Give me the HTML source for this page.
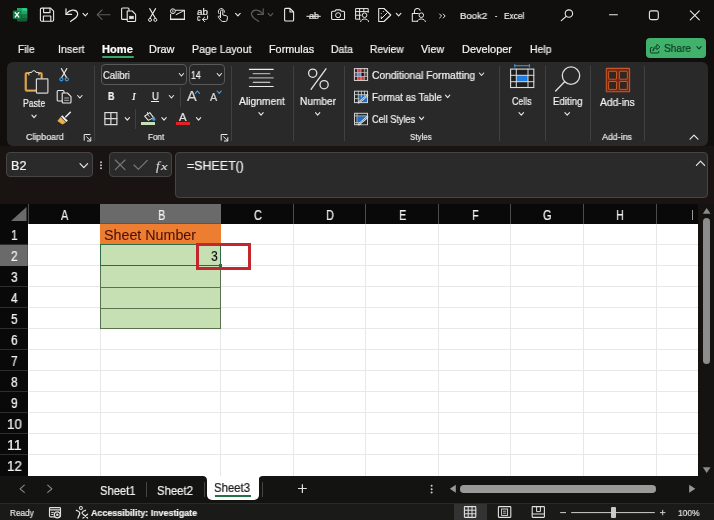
<!DOCTYPE html>
<html><head><meta charset="utf-8"><title>Book2 - Excel</title>
<style>
html,body{margin:0;padding:0;background:#100f0e;}
body{width:714px;height:520px;position:relative;overflow:hidden;font-family:"Liberation Sans",sans-serif;}
#app{position:absolute;left:0;top:0;width:714px;height:520px;overflow:hidden;background:#100f0e;}
#app div{position:absolute;box-sizing:border-box;}
#app span{position:absolute;white-space:pre;line-height:1;transform-origin:0 0;display:block;-webkit-text-stroke:0.22px currentColor;will-change:transform;}
#app svg{position:absolute;left:0;top:0;}
</style></head><body><div id="app">
<div style="left:7px;top:62px;width:701px;height:84px;background:#292929;border-radius:6px;"></div>
<div style="left:94px;top:66px;width:1px;height:75px;background:#404040;"></div>
<div style="left:231px;top:66px;width:1px;height:75px;background:#404040;"></div>
<div style="left:293px;top:66px;width:1px;height:75px;background:#404040;"></div>
<div style="left:344px;top:66px;width:1px;height:75px;background:#404040;"></div>
<div style="left:499px;top:66px;width:1px;height:75px;background:#404040;"></div>
<div style="left:545px;top:66px;width:1px;height:75px;background:#404040;"></div>
<div style="left:590px;top:66px;width:1px;height:75px;background:#404040;"></div>
<div style="left:644px;top:66px;width:1px;height:75px;background:#404040;"></div>
<div style="left:180px;top:87px;width:1px;height:20px;background:#404040;"></div>
<div style="left:135px;top:109px;width:1px;height:20px;background:#404040;"></div>
<div style="left:0px;top:146px;width:714px;height:58px;background:#191412;"></div>
<div style="left:698px;top:204px;width:16px;height:272px;background:#151312;"></div>
<div style="left:6px;top:152px;width:87px;height:25px;background:#2a2a2a;border:1px solid #454545;border-radius:4px;"></div>
<div style="left:109px;top:152px;width:63px;height:25px;background:#2a2a2a;border:1px solid #454545;border-radius:4px;"></div>
<div style="left:175px;top:152px;width:533px;height:46px;background:#2a2a2a;border:1px solid #454545;border-radius:4px;"></div>
<div style="left:0px;top:204px;width:698px;height:20px;background:#090909;"></div>
<div style="left:0px;top:224px;width:28px;height:252px;background:#090909;"></div>
<div style="left:28px;top:224px;width:670px;height:252px;background:#ffffff;"></div>
<div style="left:100px;top:224px;width:1px;height:252px;background:#e8e8e8;"></div>
<div style="left:220px;top:224px;width:1px;height:252px;background:#e8e8e8;"></div>
<div style="left:293px;top:224px;width:1px;height:252px;background:#e8e8e8;"></div>
<div style="left:365px;top:224px;width:1px;height:252px;background:#e8e8e8;"></div>
<div style="left:438px;top:224px;width:1px;height:252px;background:#e8e8e8;"></div>
<div style="left:510px;top:224px;width:1px;height:252px;background:#e8e8e8;"></div>
<div style="left:583px;top:224px;width:1px;height:252px;background:#e8e8e8;"></div>
<div style="left:656px;top:224px;width:1px;height:252px;background:#e8e8e8;"></div>
<div style="left:28px;top:244px;width:670px;height:1px;background:#e8e8e8;"></div>
<div style="left:28px;top:265px;width:670px;height:1px;background:#e8e8e8;"></div>
<div style="left:28px;top:286px;width:670px;height:1px;background:#e8e8e8;"></div>
<div style="left:28px;top:307px;width:670px;height:1px;background:#e8e8e8;"></div>
<div style="left:28px;top:328px;width:670px;height:1px;background:#e8e8e8;"></div>
<div style="left:28px;top:349px;width:670px;height:1px;background:#e8e8e8;"></div>
<div style="left:28px;top:370px;width:670px;height:1px;background:#e8e8e8;"></div>
<div style="left:28px;top:391px;width:670px;height:1px;background:#e8e8e8;"></div>
<div style="left:28px;top:412px;width:670px;height:1px;background:#e8e8e8;"></div>
<div style="left:28px;top:433px;width:670px;height:1px;background:#e8e8e8;"></div>
<div style="left:28px;top:454px;width:670px;height:1px;background:#e8e8e8;"></div>
<div style="left:28px;top:204px;width:1px;height:20px;background:#4c4c4c;"></div>
<div style="left:100px;top:204px;width:1px;height:20px;background:#4c4c4c;"></div>
<div style="left:220px;top:204px;width:1px;height:20px;background:#4c4c4c;"></div>
<div style="left:293px;top:204px;width:1px;height:20px;background:#4c4c4c;"></div>
<div style="left:365px;top:204px;width:1px;height:20px;background:#4c4c4c;"></div>
<div style="left:438px;top:204px;width:1px;height:20px;background:#4c4c4c;"></div>
<div style="left:510px;top:204px;width:1px;height:20px;background:#4c4c4c;"></div>
<div style="left:583px;top:204px;width:1px;height:20px;background:#4c4c4c;"></div>
<div style="left:656px;top:204px;width:1px;height:20px;background:#4c4c4c;"></div>
<div style="left:0px;top:244px;width:28px;height:1px;background:#2e2e2e;"></div>
<div style="left:0px;top:265px;width:28px;height:1px;background:#2e2e2e;"></div>
<div style="left:0px;top:286px;width:28px;height:1px;background:#2e2e2e;"></div>
<div style="left:0px;top:307px;width:28px;height:1px;background:#2e2e2e;"></div>
<div style="left:0px;top:328px;width:28px;height:1px;background:#2e2e2e;"></div>
<div style="left:0px;top:349px;width:28px;height:1px;background:#2e2e2e;"></div>
<div style="left:0px;top:370px;width:28px;height:1px;background:#2e2e2e;"></div>
<div style="left:0px;top:391px;width:28px;height:1px;background:#2e2e2e;"></div>
<div style="left:0px;top:412px;width:28px;height:1px;background:#2e2e2e;"></div>
<div style="left:0px;top:433px;width:28px;height:1px;background:#2e2e2e;"></div>
<div style="left:0px;top:454px;width:28px;height:1px;background:#2e2e2e;"></div>
<div style="left:100px;top:204px;width:121px;height:20px;background:#6a6a6a;border-bottom:1px solid #2f6f48;"></div>
<div style="left:0px;top:245px;width:28px;height:21px;background:#6a6a6a;border-right:1px solid #2f6f48;"></div>
<span style="left:61.42px;top:209.00px;font-size:13.8px;color:#f2f2f2;transform:scaleX(0.8000);">A</span>
<span style="left:157.72px;top:209.00px;font-size:13.8px;color:#f2f2f2;transform:scaleX(0.8000);">B</span>
<span style="left:253.51px;top:209.00px;font-size:13.8px;color:#f2f2f2;transform:scaleX(0.8000);">C</span>
<span style="left:325.91px;top:209.00px;font-size:13.8px;color:#f2f2f2;transform:scaleX(0.8000);">D</span>
<span style="left:398.82px;top:209.00px;font-size:13.8px;color:#f2f2f2;transform:scaleX(0.8000);">E</span>
<span style="left:471.53px;top:209.00px;font-size:13.8px;color:#f2f2f2;transform:scaleX(0.8000);">F</span>
<span style="left:543.01px;top:209.00px;font-size:13.8px;color:#f2f2f2;transform:scaleX(0.8000);">G</span>
<span style="left:615.71px;top:209.00px;font-size:13.8px;color:#f2f2f2;transform:scaleX(0.8000);">H</span>
<span style="left:691.60px;top:209.00px;font-size:13.8px;color:#f2f2f2;transform:scaleX(0.3917);">I</span>
<span style="left:10.55px;top:229.00px;font-size:13.8px;color:#f2f2f2;transform:scaleX(0.8748);">1</span>
<span style="left:10.55px;top:250.00px;font-size:13.8px;color:#f2f2f2;transform:scaleX(0.8748);">2</span>
<span style="left:10.55px;top:271.00px;font-size:13.8px;color:#f2f2f2;transform:scaleX(0.8748);">3</span>
<span style="left:10.55px;top:292.00px;font-size:13.8px;color:#f2f2f2;transform:scaleX(0.8748);">4</span>
<span style="left:10.55px;top:313.00px;font-size:13.8px;color:#f2f2f2;transform:scaleX(0.8748);">5</span>
<span style="left:10.55px;top:334.00px;font-size:13.8px;color:#f2f2f2;transform:scaleX(0.8748);">6</span>
<span style="left:10.55px;top:355.00px;font-size:13.8px;color:#f2f2f2;transform:scaleX(0.8748);">7</span>
<span style="left:10.55px;top:376.00px;font-size:13.8px;color:#f2f2f2;transform:scaleX(0.8748);">8</span>
<span style="left:10.55px;top:397.00px;font-size:13.8px;color:#f2f2f2;transform:scaleX(0.8748);">9</span>
<span style="left:6.50px;top:418.00px;font-size:13.8px;color:#f2f2f2;transform:scaleX(0.9640);">10</span>
<span style="left:6.50px;top:439.00px;font-size:13.8px;color:#f2f2f2;transform:scaleX(1.0337);">11</span>
<span style="left:6.50px;top:460.00px;font-size:13.8px;color:#f2f2f2;transform:scaleX(0.9640);">12</span>
<div style="left:100px;top:224px;width:121px;height:21px;background:#ed7d31;"></div>
<div style="left:100px;top:245px;width:121px;height:84px;background:#c6e0b4;"></div>
<div style="left:100px;top:245px;width:1px;height:84px;background:#58724e;"></div>
<div style="left:220px;top:245px;width:1px;height:84px;background:#58724e;"></div>
<div style="left:100px;top:287px;width:121px;height:1px;background:#58724e;"></div>
<div style="left:100px;top:308px;width:121px;height:1px;background:#58724e;"></div>
<div style="left:100px;top:328px;width:121px;height:1px;background:#58724e;"></div>
<div style="left:100px;top:244px;width:121px;height:1px;background:#2d6b45;"></div>
<div style="left:100px;top:265px;width:121px;height:1px;background:#2d6b45;"></div>
<div style="left:100px;top:245px;width:1px;height:21px;background:#2d6b45;"></div>
<div style="left:220px;top:245px;width:1px;height:21px;background:#2d6b45;"></div>
<div style="left:218.7px;top:263.7px;width:3px;height:3px;background:#2d6b45;"></div>
<span style="left:103.80px;top:228.00px;font-size:14px;color:#4a1006;transform:scaleX(1.0192);-webkit-text-stroke:0.05px #4a1006;">Sheet Number</span>
<span style="left:211.10px;top:249.00px;font-size:14.3px;color:#101010;transform:scaleX(0.8442);-webkit-text-stroke:0.1px #101010;">3</span>
<div style="left:196px;top:243px;width:55px;height:27px;background:transparent;border:3px solid #c3262c;"></div>
<div style="left:0px;top:476px;width:714px;height:27px;background:#131312;"></div>
<div style="left:0px;top:503px;width:714px;height:17px;background:#1a1a19;border-top:1px solid #2a2a2a;"></div>
<div style="left:207px;top:476px;width:51.5px;height:24px;background:#ffffff;border-radius:0 0 5px 5px;"></div>
<div style="left:214.7px;top:495px;width:36px;height:2px;background:#217346;"></div>
<div style="left:146px;top:482px;width:1px;height:15px;background:#454545;"></div>
<div style="left:204px;top:482px;width:1px;height:15px;background:#454545;"></div>
<div style="left:262px;top:482px;width:1px;height:15px;background:#454545;"></div>
<span style="left:100.30px;top:485.00px;font-size:12.4px;color:#f2f2f2;transform:scaleX(0.9031);">Sheet1</span>
<span style="left:157.00px;top:485.00px;font-size:12.4px;color:#f2f2f2;transform:scaleX(0.9133);">Sheet2</span>
<span style="left:214.40px;top:482.00px;font-size:12.4px;color:#1c1c1c;transform:scaleX(0.9158);">Sheet3</span>
<div style="left:703px;top:218px;width:7px;height:146px;background:#8c8c8c;border-radius:3.5px;"></div>
<div style="left:460px;top:485px;width:196px;height:7.5px;background:#9a9a9a;border-radius:3.75px;"></div>
<span style="left:9.70px;top:508.00px;font-size:9.6px;color:#e4e4e4;transform:scaleX(0.8578);">Ready</span>
<span style="left:91.20px;top:508.00px;font-size:9.5px;color:#f0f0f0;transform:scaleX(0.9346);font-weight:bold;">Accessibility: Investigate</span>
<div style="left:454px;top:504px;width:33px;height:16px;background:#333333;"></div>
<span style="left:677.80px;top:508.00px;font-size:9.4px;color:#e4e4e4;transform:scaleX(0.8943);">100%</span>
<div style="left:611px;top:507px;width:4.6px;height:10.5px;background:#c8c8c8;border-radius:1px;"></div>
<span style="left:460.00px;top:11.00px;font-size:9.9px;color:#ececec;transform:scaleX(0.9727);">Book2</span>
<span style="left:494.90px;top:11.00px;font-size:9.9px;color:#ececec;transform:scaleX(0.7291);">-</span>
<span style="left:504.10px;top:11.00px;font-size:9.9px;color:#ececec;transform:scaleX(0.8428);">Excel</span>
<span style="left:18.20px;top:44.00px;font-size:10.8px;color:#f2f2f2;transform:scaleX(0.9532);">File</span>
<span style="left:57.80px;top:44.00px;font-size:10.8px;color:#f2f2f2;transform:scaleX(0.9815);">Insert</span>
<span style="left:149.00px;top:44.00px;font-size:10.8px;color:#f2f2f2;transform:scaleX(1.0101);">Draw</span>
<span style="left:191.60px;top:44.00px;font-size:10.8px;color:#f2f2f2;transform:scaleX(0.9795);">Page Layout</span>
<span style="left:269.10px;top:44.00px;font-size:10.8px;color:#f2f2f2;transform:scaleX(1.0042);">Formulas</span>
<span style="left:331.10px;top:44.00px;font-size:10.8px;color:#f2f2f2;transform:scaleX(0.9643);">Data</span>
<span style="left:369.80px;top:44.00px;font-size:10.8px;color:#f2f2f2;transform:scaleX(0.9534);">Review</span>
<span style="left:421.00px;top:44.00px;font-size:10.8px;color:#f2f2f2;transform:scaleX(0.9894);">View</span>
<span style="left:461.50px;top:44.00px;font-size:10.8px;color:#f2f2f2;transform:scaleX(1.0158);">Developer</span>
<span style="left:529.50px;top:44.00px;font-size:10.8px;color:#f2f2f2;transform:scaleX(0.9676);">Help</span>
<span style="left:102.30px;top:44.00px;font-size:10.8px;color:#ffffff;transform:scaleX(1.0268);font-weight:bold;">Home</span>
<div style="left:102px;top:56px;width:31.7px;height:2px;background:#3aa567;border-radius:1px;"></div>
<div style="left:646px;top:38px;width:59.5px;height:20.3px;background:#41b26b;border-radius:4px;"></div>
<span style="left:664.10px;top:43.00px;font-size:10.9px;color:#0c3a20;transform:scaleX(0.9286);">Share</span>
<span style="left:26.10px;top:133.00px;font-size:9.3px;color:#e6e6e6;transform:scaleX(0.9522);">Clipboard</span>
<span style="left:147.80px;top:133.00px;font-size:9.3px;color:#e6e6e6;transform:scaleX(0.8710);">Font</span>
<span style="left:410.30px;top:133.00px;font-size:9.3px;color:#e6e6e6;transform:scaleX(0.8571);">Styles</span>
<span style="left:602.00px;top:133.00px;font-size:9.3px;color:#e6e6e6;transform:scaleX(0.9516);">Add-ins</span>
<span style="left:23.10px;top:99.00px;font-size:10.2px;color:#f2f2f2;transform:scaleX(0.8510);">Paste</span>
<span style="left:238.60px;top:97.00px;font-size:10.4px;color:#f2f2f2;transform:scaleX(0.9923);">Alignment</span>
<span style="left:300.00px;top:97.00px;font-size:10.4px;color:#f2f2f2;transform:scaleX(0.9730);">Number</span>
<span style="left:512.00px;top:97.00px;font-size:10.4px;color:#f2f2f2;transform:scaleX(0.8436);">Cells</span>
<span style="left:552.80px;top:97.00px;font-size:10.4px;color:#f2f2f2;transform:scaleX(0.9277);">Editing</span>
<span style="left:600.00px;top:97.00px;font-size:10.6px;color:#f2f2f2;transform:scaleX(0.9684);">Add-ins</span>
<span style="left:371.60px;top:71.00px;font-size:10.4px;color:#f2f2f2;transform:scaleX(0.9864);">Conditional Formatting</span>
<span style="left:371.60px;top:93.00px;font-size:10.4px;color:#f2f2f2;transform:scaleX(0.9397);">Format as Table</span>
<span style="left:371.60px;top:115.00px;font-size:10.4px;color:#f2f2f2;transform:scaleX(0.8791);">Cell Styles</span>
<div style="left:101px;top:64px;width:86px;height:21px;background:#272727;border:1px solid #595959;border-radius:4px;"></div>
<div style="left:188.5px;top:64px;width:36.5px;height:21px;background:#272727;border:1px solid #595959;border-radius:4px;"></div>
<span style="left:103.30px;top:71.00px;font-size:10.4px;color:#f2f2f2;transform:scaleX(0.9090);">Calibri</span>
<span style="left:191.20px;top:71.00px;font-size:10.4px;color:#f2f2f2;transform:scaleX(0.8384);">14</span>
<span style="left:108.20px;top:91.00px;font-size:10.8px;color:#f2f2f2;transform:scaleX(0.8202);font-weight:bold;">B</span>
<span style="left:131.56px;top:91.00px;font-size:11px;color:#f2f2f2;transform:scaleX(1.0114);font-style:italic;font-family:'Liberation Serif',serif;">I</span>
<span style="left:151.50px;top:91.00px;font-size:10.6px;color:#f2f2f2;transform:scaleX(0.9140);">U</span>
<div style="left:151.3px;top:101.2px;width:7.4px;height:1px;background:#f2f2f2;"></div>
<span style="left:186.50px;top:89.00px;font-size:14.2px;color:#d8d8d8;transform:scaleX(1.0234);">A</span>
<span style="left:210.20px;top:92.00px;font-size:10.8px;color:#d8d8d8;transform:scaleX(0.9849);">A</span>
<span style="left:178.90px;top:112.00px;font-size:10.8px;color:#e0e0e0;transform:scaleX(1.0542);">A</span>
<div style="left:175.8px;top:122.3px;width:14.2px;height:3px;background:#e32227;"></div>
<div style="left:141.2px;top:122.3px;width:13.8px;height:3px;background:#c5e0b4;"></div>
<span style="left:11.10px;top:160.00px;font-size:12.6px;color:#f2f2f2;transform:scaleX(0.9998);">B2</span>
<span style="left:186.60px;top:160.00px;font-size:12.6px;color:#f2f2f2;transform:scaleX(0.9849);">=SHEET()</span>
<span style="left:155.60px;top:159.00px;font-size:13.5px;color:#d6d6d6;transform:scaleX(0.9376);font-style:italic;font-family:'Liberation Serif',serif;">f</span>
<span style="left:160.78px;top:162.00px;font-size:10.5px;color:#d6d6d6;transform:scaleX(1.3947);font-style:italic;font-family:'Liberation Serif',serif;">x</span>
<span style="left:196.80px;top:8.00px;font-size:8.6px;color:#e9e9e9;transform:scaleX(1.1497);">ab</span>
<span style="left:197.10px;top:14.00px;font-size:8.6px;color:#e9e9e9;transform:scaleX(0.8140);">c</span>
<span style="left:308.60px;top:12.00px;font-size:9.2px;color:#e9e9e9;transform:scaleX(0.9770);">ab</span>
<svg width="714" height="520" viewBox="0 0 714 520">
<path d="M26.5 207 L26.5 221 L11 221 Z" fill="#6a6a6a"/>
<path d="M202.5 476 H207 V480.5 Q207 476 202.5 476 Z M263 476 H258.5 V480.5 Q258.5 476 263 476 Z" fill="#ffffff"/>
<path d="M24.3 485.2 L20.1 488.8 L24.3 492.4" stroke="#8c8c8c" stroke-width="1.1" fill="none" stroke-linecap="round" stroke-linejoin="round"/>
<path d="M47.7 485.2 L51.9 488.8 L47.7 492.4" stroke="#8c8c8c" stroke-width="1.1" fill="none" stroke-linecap="round" stroke-linejoin="round"/>
<path d="M298 488.5 H306.8 M302.4 484.2 V492.9" stroke="#e0e0e0" stroke-width="1.2" fill="none"/>
<path d="M702.8 213.8 L710.6 213.8 L706.7 208 Z" fill="#8a8a8a"/>
<path d="M702.8 467.3 L710.6 467.3 L706.7 473 Z" fill="#8a8a8a"/>
<path d="M455.8 484.8 L455.8 492.8 L449.8 488.8 Z" fill="#9a9a9a"/>
<path d="M689.2 484.8 L689.2 492.8 L695.3 488.8 Z" fill="#9a9a9a"/>
<circle cx="431.6" cy="485.8" r="1" fill="#d0d0d0"/>
<circle cx="431.6" cy="489.2" r="1" fill="#d0d0d0"/>
<circle cx="431.6" cy="492.6" r="1" fill="#d0d0d0"/>
<path d="M560.2 512.6 H566 M571.2 512.6 H654.8 M660 512.6 H665.4 M662.7 509.9 V515.3" stroke="#cfcfcf" stroke-width="1" fill="none"/>
<rect x="17" y="8" width="10.2" height="13.3" rx="1.3" stroke="none" stroke-width="0" fill="#1e9c5b"/>
<path d="M22.1 8 h3.8 a1.3 1.3 0 0 1 1.3 1.3 v2.0 h-5.1z" fill="#35c481"/>
<path d="M17 8 h5.1 v3.3 h-5.1z" fill="#21a366" />
<path d="M22.1 11.3 h5.1 v3.3 h-5.1z" fill="#21a366"/>
<path d="M17 14.6 h10.2 v5.4 a1.3 1.3 0 0 1 -1.3 1.3 h-7.6 a1.3 1.3 0 0 1 -1.3 -1.3z" fill="#165c36"/>
<path d="M22.1 14.6 h5.1 v3.3 h-5.1z" fill="#117c41"/>
<rect x="12.8" y="10.6" width="8.4" height="8.4" rx="1.2" stroke="none" stroke-width="0" fill="#107c41"/>
<path d="M15.2 12.6 L18.8 17 M18.8 12.6 L15.2 17" stroke="#ffffff" stroke-width="1.25" fill="none" stroke-linecap="round" stroke-linejoin="round" />
<path d="M41.6 8.1 H50.6 L53.6 11.1 V20.1 a1.2 1.2 0 0 1 -1.2 1.2 H41.6 a1.2 1.2 0 0 1 -1.2 -1.2 V9.3 a1.2 1.2 0 0 1 1.2 -1.2 Z" stroke="#e9e9e9" stroke-width="1.1" fill="none" stroke-linecap="round" stroke-linejoin="round" />
<path d="M43.6 8.3 V12.6 H50 V8.3" stroke="#e9e9e9" stroke-width="1.1" fill="none" stroke-linecap="round" stroke-linejoin="round" />
<path d="M43.4 21.1 V16 H50.8 V21.1" stroke="#e9e9e9" stroke-width="1.1" fill="none" stroke-linecap="round" stroke-linejoin="round" />
<path d="M66 8.8 V14.4 H71.6" stroke="#e9e9e9" stroke-width="1.2" fill="none" stroke-linecap="round" stroke-linejoin="round" />
<path d="M66.2 14.2 C69.5 9.2 76.2 8.6 77.6 13 C78.6 16.6 74.5 18.6 70.6 21.5" stroke="#e9e9e9" stroke-width="1.2" fill="none" stroke-linecap="round" stroke-linejoin="round" />
<path d="M83 13.3L85.3 15.8L87.6 13.3" stroke="#e9e9e9" stroke-width="1.1" fill="none" stroke-linecap="round" stroke-linejoin="round"/>
<path d="M97.2 14.7 H110 M102 10 L97.2 14.7 L102 19.4" stroke="#5c5c5c" stroke-width="1.1" fill="none" stroke-linecap="round" stroke-linejoin="round" />
<path d="M127 19.4 H122.6 a1 1 0 0 1 -1 -1 V9 a1 1 0 0 1 1 -1 H128 a1 1 0 0 1 1 1 V10.6" stroke="#e9e9e9" stroke-width="1.1" fill="none" stroke-linecap="round" stroke-linejoin="round" />
<path d="M127.2 11 H132.2 L135.6 14.4 V20.5 a1 1 0 0 1 -1 1 H128.2 a1 1 0 0 1 -1 -1 Z" stroke="#e9e9e9" stroke-width="1.1" fill="none" stroke-linecap="round" stroke-linejoin="round" />
<rect x="129.6" y="16.2" width="3.8" height="2.6" rx="0" stroke="#e9e9e9" stroke-width="0.6" fill="#e9e9e9"/>
<path d="M149.7 8.6 L155.4 18.3 M155.6 8.6 L149.9 18.3" stroke="#e9e9e9" stroke-width="1.1" fill="none" stroke-linecap="round" stroke-linejoin="round" />
<circle cx="150" cy="19.9" r="1.5" stroke="#e9e9e9" stroke-width="1.0" fill="none"/>
<circle cx="155.3" cy="19.9" r="1.5" stroke="#e9e9e9" stroke-width="1.0" fill="none"/>
<path d="M175.6 10.2 H184.4 V19.4 H170.6 V14.2" stroke="#e9e9e9" stroke-width="1.1" fill="none" stroke-linecap="round" stroke-linejoin="round" />
<circle cx="172.9" cy="11.2" r="2.4" stroke="#e9e9e9" stroke-width="1.0" fill="none"/>
<path d="M172.9 10.2 V12.2" stroke="#e9e9e9" stroke-width="0.9" fill="none" stroke-linecap="round" stroke-linejoin="round" />
<path d="M176.2 14.6 L184 10.6" stroke="#e9e9e9" stroke-width="1.0" fill="none" stroke-linecap="round" stroke-linejoin="round" />
<path d="M170.6 19.4 H184.4" stroke="#e9e9e9" stroke-width="1.4" fill="none" stroke-linecap="round" stroke-linejoin="round" />
<path d="M207.6 15.8 V18.2 a1.2 1.2 0 0 1 -1.2 1.2 H202.6 M204.6 17.2 L202.4 19.4 L204.6 21.6" stroke="#e9e9e9" stroke-width="1.0" fill="none" stroke-linecap="round" stroke-linejoin="round" />
<path d="M218.9 13.6 A3.1 3.1 0 1 1 224.4 12.2" stroke="#e9e9e9" stroke-width="1.0" fill="none" stroke-linecap="round" stroke-linejoin="round" />
<path d="M220.5 17.6 V11.3 a1.15 1.15 0 0 1 2.3 0 V15 l3.6 0.8 a1.4 1.4 0 0 1 1.1 1.5 l-0.5 2.9 a1.6 1.6 0 0 1 -1.6 1.3 H222.6 a1.6 1.6 0 0 1 -1.3 -0.7 L218.3 17.3 a1 1 0 0 1 1.5 -1.2 Z" stroke="#e9e9e9" stroke-width="1.0" fill="none" stroke-linecap="round" stroke-linejoin="round" />
<path d="M235.6 13.3L237.89999999999998 15.8L240.2 13.3" stroke="#e9e9e9" stroke-width="1.1" fill="none" stroke-linecap="round" stroke-linejoin="round"/>
<path d="M263.2 8.8 V14.4 H257.6" stroke="#5c5c5c" stroke-width="1.2" fill="none" stroke-linecap="round" stroke-linejoin="round" />
<path d="M263 14.2 C259.7 9.2 253 8.6 251.6 13 C250.6 16.6 254.7 18.6 258.6 21.5" stroke="#5c5c5c" stroke-width="1.2" fill="none" stroke-linecap="round" stroke-linejoin="round" />
<path d="M268.2 13.3L270.5 15.8L272.8 13.3" stroke="#5c5c5c" stroke-width="1.1" fill="none" stroke-linecap="round" stroke-linejoin="round"/>
<path d="M285.6 8.4 H290 L293.6 12 V20 a1 1 0 0 1 -1 1 H285.6 a1 1 0 0 1 -1 -1 V9.4 a1 1 0 0 1 1 -1 Z M290 8.6 V12 H293.4" stroke="#e9e9e9" stroke-width="1.1" fill="none" stroke-linecap="round" stroke-linejoin="round" />
<path d="M306.8 16.3 H320.4" stroke="#e9e9e9" stroke-width="1.0" fill="none" stroke-linecap="round" stroke-linejoin="round" />
<path d="M332.7 11.2 H335 L336 9.9 H340.2 L341.2 11.2 H343.4 a1.1 1.1 0 0 1 1.1 1.1 V18.4 a1.1 1.1 0 0 1 -1.1 1.1 H332.7 a1.1 1.1 0 0 1 -1.1 -1.1 V12.3 a1.1 1.1 0 0 1 1.1 -1.1 Z" stroke="#e9e9e9" stroke-width="1.1" fill="none" stroke-linecap="round" stroke-linejoin="round" />
<circle cx="338.1" cy="15.2" r="2.5" stroke="#e9e9e9" stroke-width="1.0" fill="none"/>
<path d="M360 19.2 H355.6 V8.6 H368.2 V12.4 M355.6 11.6 H368.2 M359.6 8.6 V19.2 M355.6 15.2 H361 M363.8 8.6 V11.6" stroke="#e9e9e9" stroke-width="1.0" fill="none" stroke-linecap="round" stroke-linejoin="round" />
<circle cx="364.6" cy="15.2" r="2.3" stroke="#e9e9e9" stroke-width="1.0" fill="none"/>
<path d="M360.6 21.6 C360.8 18 368.4 18 368.6 21.6" stroke="#e9e9e9" stroke-width="1.0" fill="none" stroke-linecap="round" stroke-linejoin="round" />
<path d="M378.7 8.5 H384 L390.8 15 L384 21.5 H378.7 Z" stroke="#e9e9e9" stroke-width="1.05" fill="none" stroke-linecap="round" stroke-linejoin="round" />
<path d="M381.4 18.6 L387.2 12.8 M381.4 18.6 L381.2 16.9 M383.4 11.4 v0.1 M381.3 13.6 v0.1" stroke="#e9e9e9" stroke-width="1.0" fill="none" stroke-linecap="round" stroke-linejoin="round" />
<path d="M396.3 13.3L398.6 15.8L400.9 13.3" stroke="#e9e9e9" stroke-width="1.1" fill="none" stroke-linecap="round" stroke-linejoin="round"/>
<path d="M414.4 13.4 V11.4 a3 3 0 0 1 5.7 -1.2" stroke="#e9e9e9" stroke-width="1.05" fill="none" stroke-linecap="round" stroke-linejoin="round" />
<path d="M417.2 21.3 H412.3 V13.5 H418.4" stroke="#e9e9e9" stroke-width="1.05" fill="none" stroke-linecap="round" stroke-linejoin="round" />
<circle cx="421.3" cy="15.2" r="2.3" stroke="#e9e9e9" stroke-width="1.0" fill="none"/>
<path d="M417.2 21.6 C417.4 18 425.2 18 425.4 21.6" stroke="#e9e9e9" stroke-width="1.0" fill="none" stroke-linecap="round" stroke-linejoin="round" />
<path d="M439.6 14 L441.6 16 L439.6 18 M443.2 14 L445.2 16 L443.2 18" stroke="#e9e9e9" stroke-width="1.0" fill="none" stroke-linecap="round" stroke-linejoin="round" />
<circle cx="568.9" cy="13.6" r="3.7" stroke="#e9e9e9" stroke-width="1.1" fill="none"/>
<path d="M566.2 16.4 L561.3 20.6" stroke="#e9e9e9" stroke-width="1.2" fill="none" stroke-linecap="round" stroke-linejoin="round" />
<path d="M609.5 14.8 H617.4" stroke="#e9e9e9" stroke-width="1.1" fill="none" stroke-linecap="round" stroke-linejoin="round" />
<rect x="649.4" y="10.9" width="8.9" height="8.7" rx="1.9" stroke="#e9e9e9" stroke-width="1.1" fill="none"/>
<path d="M690.3 10.8 L699.3 19.8 M699.3 10.8 L690.3 19.8" stroke="#e9e9e9" stroke-width="1.1" fill="none" stroke-linecap="round" stroke-linejoin="round" />
<path d="M652.2 47.6 H651.2 a0.8 0.8 0 0 0 -0.8 0.8 V52.2 a0.8 0.8 0 0 0 0.8 0.8 H658 a0.8 0.8 0 0 0 0.8 -0.8 V51.4" stroke="#0c3a20" stroke-width="1.0" fill="none" stroke-linecap="round" stroke-linejoin="round" />
<path d="M653 50.6 C653.2 47.6 655.2 46.2 657 46.2 V44.2 L659.8 47 L657 49.8 V47.9 C655.4 47.9 654 48.6 653 50.6 Z" stroke="#0c3a20" stroke-width="0.9" fill="none" stroke-linecap="round" stroke-linejoin="round" />
<path d="M696.9 46.6L699.0 48.8L701.1 46.6" stroke="#0c3a20" stroke-width="1.1" fill="none" stroke-linecap="round" stroke-linejoin="round"/>
<rect x="25.6" y="72.9" width="16.2" height="17.9" rx="1.2" stroke="#d8942f" stroke-width="2.0" fill="none"/>
<rect x="26.2" y="73.5" width="15.0" height="16.7" rx="0.8" stroke="#f3c777" stroke-width="0.7" fill="none"/>
<path d="M28.9 75 V73.3 a0.9 0.9 0 0 1 0.9 -0.9 H31.7 a2.2 2.2 0 0 1 4.3 0 H38 a0.9 0.9 0 0 1 0.9 0.9 V75" stroke="#e9e9e9" stroke-width="1.0" fill="#292929" stroke-linecap="round" stroke-linejoin="round" />
<rect x="36.4" y="78.8" width="11.5" height="14.3" rx="0.8" stroke="#d6d6d6" stroke-width="1.2" fill="#2d2d2d"/>
<path d="M31.9 115.2L34.05 117.6L36.2 115.2" stroke="#e9e9e9" stroke-width="1.1" fill="none" stroke-linecap="round" stroke-linejoin="round"/>
<path d="M61.4 68.6 L66.6 77.6 M66.8 68.6 L61.6 77.6" stroke="#e9e9e9" stroke-width="1.1" fill="none" stroke-linecap="round" stroke-linejoin="round" />
<circle cx="61.4" cy="79.3" r="1.6" stroke="#3f9be3" stroke-width="1.1" fill="none"/>
<circle cx="66.8" cy="79.3" r="1.6" stroke="#3f9be3" stroke-width="1.1" fill="none"/>
<path d="M62 101 H58.2 a1 1 0 0 1 -1 -1 V91.5 a1 1 0 0 1 1 -1 H63 a1 1 0 0 1 1 1 V92.6" stroke="#e9e9e9" stroke-width="1.1" fill="none" stroke-linecap="round" stroke-linejoin="round" />
<path d="M62.2 93 H67.4 L71 96.6 V102 a1 1 0 0 1 -1 1 H63.2 a1 1 0 0 1 -1 -1 Z" stroke="#e9e9e9" stroke-width="1.1" fill="none" stroke-linecap="round" stroke-linejoin="round" />
<path d="M64.6 98 H68.6 M64.6 100.3 H68.6" stroke="#bdbdbd" stroke-width="0.9" fill="none" stroke-linecap="round" stroke-linejoin="round" />
<path d="M77.7 95.5L79.85 98L82 95.5" stroke="#e9e9e9" stroke-width="1.1" fill="none" stroke-linecap="round" stroke-linejoin="round"/>
<path d="M70.3 112.3 L65.8 116.8" stroke="#e9e9e9" stroke-width="1.6" fill="none" stroke-linecap="round" stroke-linejoin="round" />
<path d="M62.3 115.2 L67.9 120.8 L66.2 122 L61 116.6 Z" fill="#f0f0f0"/>
<path d="M60.6 117 L65.9 122.4 L62.4 124.6 L57.4 120.9 Z" fill="#e9b04f"/>
<path d="M84.2 140.2 V134.5 H90.0" stroke="#e9e9e9" stroke-width="1.0" fill="none" stroke-linecap="round" stroke-linejoin="round" />
<path d="M86.60000000000001 136.8 L90.60000000000001 140.8 M90.8 137.6 V141 H87.4" stroke="#e9e9e9" stroke-width="1.0" fill="none" stroke-linecap="round" stroke-linejoin="round" />
<path d="M221.2 140.2 V134.5 H227.0" stroke="#e9e9e9" stroke-width="1.0" fill="none" stroke-linecap="round" stroke-linejoin="round" />
<path d="M223.6 136.8 L227.6 140.8 M227.79999999999998 137.6 V141 H224.39999999999998" stroke="#e9e9e9" stroke-width="1.0" fill="none" stroke-linecap="round" stroke-linejoin="round" />
<path d="M179.3 73.5L181.45 76L183.6 73.5" stroke="#e9e9e9" stroke-width="1.1" fill="none" stroke-linecap="round" stroke-linejoin="round"/>
<path d="M217.2 73.5L219.35 76L221.5 73.5" stroke="#e9e9e9" stroke-width="1.1" fill="none" stroke-linecap="round" stroke-linejoin="round"/>
<path d="M169.3 95.5L171.45 98L173.6 95.5" stroke="#e9e9e9" stroke-width="1.1" fill="none" stroke-linecap="round" stroke-linejoin="round"/>
<path d="M195.3 93.4 L197.4 91 L199.5 93.4" stroke="#4aa3e8" stroke-width="1.1" fill="none" stroke-linecap="round" stroke-linejoin="round" />
<path d="M217.2 91 L219.2 93.3 L221.2 91" stroke="#4aa3e8" stroke-width="1.1" fill="none" stroke-linecap="round" stroke-linejoin="round" />
<rect x="104.9" y="112.6" width="12" height="12" rx="0" stroke="#dadada" stroke-width="1.2" fill="none"/>
<path d="M110.9 112.6 V124.6 M104.9 118.6 H116.9" stroke="#dadada" stroke-width="1.2" fill="none" stroke-linecap="round" stroke-linejoin="round" />
<path d="M125.2 117.7L127.35 120.2L129.5 117.7" stroke="#e9e9e9" stroke-width="1.1" fill="none" stroke-linecap="round" stroke-linejoin="round"/>
<path d="M144.6 116.2 L149.8 112.6 L153.6 117.6 L148.4 120.4 Z" stroke="#e9e9e9" stroke-width="1.05" fill="none" stroke-linecap="round" stroke-linejoin="round" />
<path d="M147.4 112.4 C147.2 114.2 148 115.6 149.2 116.4" stroke="#e9e9e9" stroke-width="0.9" fill="none" stroke-linecap="round" stroke-linejoin="round" />
<path d="M153.9 116.2 c0.9 1.3 1.5 2.2 1.5 3 a1.5 1.5 0 0 1 -3 0 c0 -0.8 0.6 -1.7 1.5 -3z" fill="#4a9be0"/>
<path d="M161.9 117.7L164.05 120.2L166.2 117.7" stroke="#e9e9e9" stroke-width="1.1" fill="none" stroke-linecap="round" stroke-linejoin="round"/>
<path d="M196.4 117.7L198.55 120.2L200.7 117.7" stroke="#e9e9e9" stroke-width="1.1" fill="none" stroke-linecap="round" stroke-linejoin="round"/>
<path d="M249.4 69.4 H273.2 M253.2 82.3 H269.8 M249.4 86.5 H273.2" stroke="#ececec" stroke-width="1.1" fill="none" stroke-linecap="round" stroke-linejoin="round" />
<path d="M253.2 73.7 H269.8 M249.4 77.9 H273.2" stroke="#a8a8a8" stroke-width="1.3" fill="none" stroke-linecap="round" stroke-linejoin="round" />
<path d="M258.9 112.7L261.04999999999995 115.2L263.2 112.7" stroke="#e9e9e9" stroke-width="1.1" fill="none" stroke-linecap="round" stroke-linejoin="round"/>
<circle cx="312.7" cy="73.2" r="4.1" stroke="#e4e4e4" stroke-width="1.3" fill="none"/>
<circle cx="324.1" cy="84.7" r="4.1" stroke="#e4e4e4" stroke-width="1.3" fill="none"/>
<path d="M326 68.8 L311 89.3" stroke="#e4e4e4" stroke-width="1.3" fill="none" stroke-linecap="round" stroke-linejoin="round" />
<path d="M315.5 112.7L317.65 115.2L319.8 112.7" stroke="#e9e9e9" stroke-width="1.1" fill="none" stroke-linecap="round" stroke-linejoin="round"/>
<rect x="354.40" y="68.60" width="3.3" height="3.95" fill="#43201f"/>
<rect x="357.70" y="68.60" width="3.3" height="3.95" fill="#e3343a"/>
<rect x="361.00" y="68.60" width="3.3" height="3.95" fill="#3a2322"/>
<rect x="364.30" y="68.60" width="3.3" height="3.95" fill="#4b4444"/>
<rect x="354.40" y="72.55" width="3.3" height="3.95" fill="#39609f"/>
<rect x="357.70" y="72.55" width="3.3" height="3.95" fill="#5a8bd2"/>
<rect x="361.00" y="72.55" width="3.3" height="3.95" fill="#120c0c"/>
<rect x="364.30" y="72.55" width="3.3" height="3.95" fill="#5a5a5a"/>
<rect x="354.40" y="76.50" width="3.3" height="3.95" fill="#43201f"/>
<rect x="357.70" y="76.50" width="3.3" height="3.95" fill="#e3343a"/>
<rect x="361.00" y="76.50" width="3.3" height="3.95" fill="#d8383d"/>
<rect x="364.30" y="76.50" width="3.3" height="3.95" fill="#3a2a2a"/>
<rect x="354.4" y="68.6" width="13.2" height="11.85" rx="0" stroke="#dcd2d2" stroke-width="1.0" fill="none"/>
<path d="M357.70 68.6 V80.44999999999999 M361.00 68.6 V80.44999999999999 M364.30 68.6 V80.44999999999999 M354.4 72.55 H367.59999999999997 M354.4 76.5 H367.59999999999997" stroke="#d8c8c8" stroke-width="0.7" fill="none" stroke-linecap="round" stroke-linejoin="round" />
<rect x="358.3" y="94.6" width="9.2" height="8" fill="#1f6fc4"/>
<rect x="354.5" y="91.2" width="13" height="11.4" rx="0" stroke="#d0d0d0" stroke-width="1.0" fill="none"/>
<path d="M354.5 94.6 H367.5 M358.3 91.2 V102.6 M361.4 91.2 V97 M364.5 91.2 V95.4 M354.5 98.6 H359" stroke="#d0d0d0" stroke-width="0.8" fill="none" stroke-linecap="round" stroke-linejoin="round" />
<path d="M358.7 102.5 L367.3 95.5" stroke="#f6f6f6" stroke-width="2.0" fill="none" stroke-linecap="round" stroke-linejoin="round" />
<path d="M359 102.2 L367 95.8" stroke="#25303c" stroke-width="0.6" fill="none" stroke-linecap="round" stroke-linejoin="round" />
<rect x="357.4" y="116.2" width="9.6" height="6.2" fill="#1f6fc4"/>
<rect x="354.5" y="113.3" width="13" height="11.4" rx="0" stroke="#d0d0d0" stroke-width="1.0" fill="none"/>
<path d="M357 113.3 V124.7 M354.5 115.9 H367.5 M354.5 122.6 H360" stroke="#d0d0d0" stroke-width="0.8" fill="none" stroke-linecap="round" stroke-linejoin="round" />
<path d="M361.5 124.2 L367 119.2 V124.2 Z" fill="#292929"/>
<path d="M358.8 124.4 L367.3 117" stroke="#f6f6f6" stroke-width="2.0" fill="none" stroke-linecap="round" stroke-linejoin="round" />
<path d="M359.1 124.1 L367 117.3" stroke="#25303c" stroke-width="0.6" fill="none" stroke-linecap="round" stroke-linejoin="round" />
<path d="M479.4 73L481.54999999999995 75.5L483.7 73" stroke="#e9e9e9" stroke-width="1.1" fill="none" stroke-linecap="round" stroke-linejoin="round"/>
<path d="M445.5 95.2L447.65 97.7L449.8 95.2" stroke="#e9e9e9" stroke-width="1.1" fill="none" stroke-linecap="round" stroke-linejoin="round"/>
<path d="M419.4 117.2L421.54999999999995 119.7L423.7 117.2" stroke="#e9e9e9" stroke-width="1.1" fill="none" stroke-linecap="round" stroke-linejoin="round"/>
<rect x="510.6" y="69.1" width="23.2" height="18.4" rx="0" stroke="#dcdcdc" stroke-width="1.1" fill="#1d1d1d"/>
<rect x="516.3" y="75.3" width="11.7" height="6.4" fill="#1f7ce0"/>
<path d="M516.3 69.1 V87.5 M528 69.1 V87.5 M510.6 75.3 H533.8 M510.6 81.7 H533.8" stroke="#dcdcdc" stroke-width="1.0" fill="none" stroke-linecap="round" stroke-linejoin="round" />
<path d="M514.8 65.8 H529.4 M514.8 64.6 V67 M529.4 64.6 V67" stroke="#4a9be0" stroke-width="1.1" fill="none" stroke-linecap="round" stroke-linejoin="round" />
<path d="M519 112.7L521.3 115.2L523.6 112.7" stroke="#e9e9e9" stroke-width="1.1" fill="none" stroke-linecap="round" stroke-linejoin="round"/>
<circle cx="571" cy="75.6" r="8.7" stroke="#dcdcdc" stroke-width="1.3" fill="none"/>
<path d="M564.6 81.8 L555.6 91" stroke="#dcdcdc" stroke-width="1.4" fill="none" stroke-linecap="round" stroke-linejoin="round" />
<path d="M564.9 112.7L567.2 115.2L569.5 112.7" stroke="#e9e9e9" stroke-width="1.1" fill="none" stroke-linecap="round" stroke-linejoin="round"/>
<rect x="606.3" y="68.4" width="23.3" height="23.4" rx="0.5" stroke="#c8582c" stroke-width="1.1" fill="#74280f"/>
<rect x="608.6" y="71.3" width="7.9" height="7.9" rx="0.3" stroke="#c8582c" stroke-width="1.0" fill="#33261f"/>
<rect x="608.6" y="81.5" width="7.9" height="7.9" rx="0.3" stroke="#c8582c" stroke-width="1.0" fill="#33261f"/>
<rect x="619.4" y="71.3" width="7.9" height="7.9" rx="0.3" stroke="#c8582c" stroke-width="1.0" fill="#33261f"/>
<rect x="619.4" y="81.5" width="7.9" height="7.9" rx="0.3" stroke="#c8582c" stroke-width="1.0" fill="#33261f"/>
<path d="M690 139.2 L694 135.2 L698 139.2" stroke="#e9e9e9" stroke-width="1.2" fill="none" stroke-linecap="round" stroke-linejoin="round" />
<path d="M80 163.6 L83.8 167.6 L87.6 163.6" stroke="#e9e9e9" stroke-width="1.2" fill="none" stroke-linecap="round" stroke-linejoin="round" />
<circle cx="101" cy="162.2" r="0.95" fill="#d0d0d0"/>
<circle cx="101" cy="165.2" r="0.95" fill="#d0d0d0"/>
<circle cx="101" cy="168.2" r="0.95" fill="#d0d0d0"/>
<path d="M115.3 160 L125 169.7 M125 160 L115.3 169.7" stroke="#7c7c7c" stroke-width="1.1" fill="none" stroke-linecap="round" stroke-linejoin="round" />
<path d="M134 165 L138.4 169.3 L147.3 160.4" stroke="#7c7c7c" stroke-width="1.1" fill="none" stroke-linecap="round" stroke-linejoin="round" />
<path d="M696.4 165.3 L700.5 161.2 L704.6 165.3" stroke="#e9e9e9" stroke-width="1.2" fill="none" stroke-linecap="round" stroke-linejoin="round" />
<rect x="49.5" y="507.6" width="11" height="9.2" rx="0.9" stroke="#e2e2e2" stroke-width="1.15" fill="none"/>
<path d="M49.5 509.9 H60.5" stroke="#e2e2e2" stroke-width="1.1" fill="none" stroke-linecap="round" stroke-linejoin="round" />
<path d="M51.6 512.4 H53.4 M51.6 514.4 H53" stroke="#e2e2e2" stroke-width="1.0" fill="none" stroke-linecap="round" stroke-linejoin="round" />
<circle cx="57.3" cy="514.8" r="3.0" stroke="#e2e2e2" stroke-width="1.3" fill="#1a1a19"/>
<circle cx="57.3" cy="514.8" r="1.25" stroke="#e2e2e2" stroke-width="0" fill="#e2e2e2"/>
<circle cx="80.9" cy="508" r="1.45" stroke="#e2e2e2" stroke-width="1.1" fill="none"/>
<path d="M76.4 510.3 C78.6 511.3 79.6 511.5 79.6 512.6 V514.2 L77.9 518 M85.4 510.3 C83.2 511.3 82.2 511.5 82.2 512.6 V513.4" stroke="#e2e2e2" stroke-width="1.3" fill="none" stroke-linecap="round" stroke-linejoin="round" />
<path d="M83 514.2 L87.6 518 M87.6 514.2 L83 518" stroke="#e2e2e2" stroke-width="1.2" fill="none" stroke-linecap="round" stroke-linejoin="round" />
<rect x="464.4" y="506.6" width="11.4" height="10.8" rx="0.6" stroke="#e2e2e2" stroke-width="1.1" fill="none"/>
<path d="M468.2 506.6 V517.4 M472 506.6 V517.4 M464.4 510.2 H475.8 M464.4 513.8 H475.8" stroke="#e2e2e2" stroke-width="1.0" fill="none" stroke-linecap="round" stroke-linejoin="round" />
<rect x="498.4" y="506.6" width="12.4" height="10.8" rx="0.6" stroke="#e2e2e2" stroke-width="1.1" fill="none"/>
<rect x="501.6" y="509" width="6" height="6.4" rx="0" stroke="#e2e2e2" stroke-width="0.9" fill="none"/>
<path d="M503.4 511.2 H505.8 M503.4 513.2 H505.8" stroke="#e2e2e2" stroke-width="0.8" fill="none" stroke-linecap="round" stroke-linejoin="round" />
<rect x="532.2" y="506.6" width="12.2" height="10.8" rx="0.6" stroke="#e2e2e2" stroke-width="1.1" fill="none"/>
<path d="M532.2 514 H544.4 M536.6 506.6 V511.6 H540.4 V506.6" stroke="#e2e2e2" stroke-width="1.0" fill="none" stroke-linecap="round" stroke-linejoin="round" />
</svg>
</div></body></html>
